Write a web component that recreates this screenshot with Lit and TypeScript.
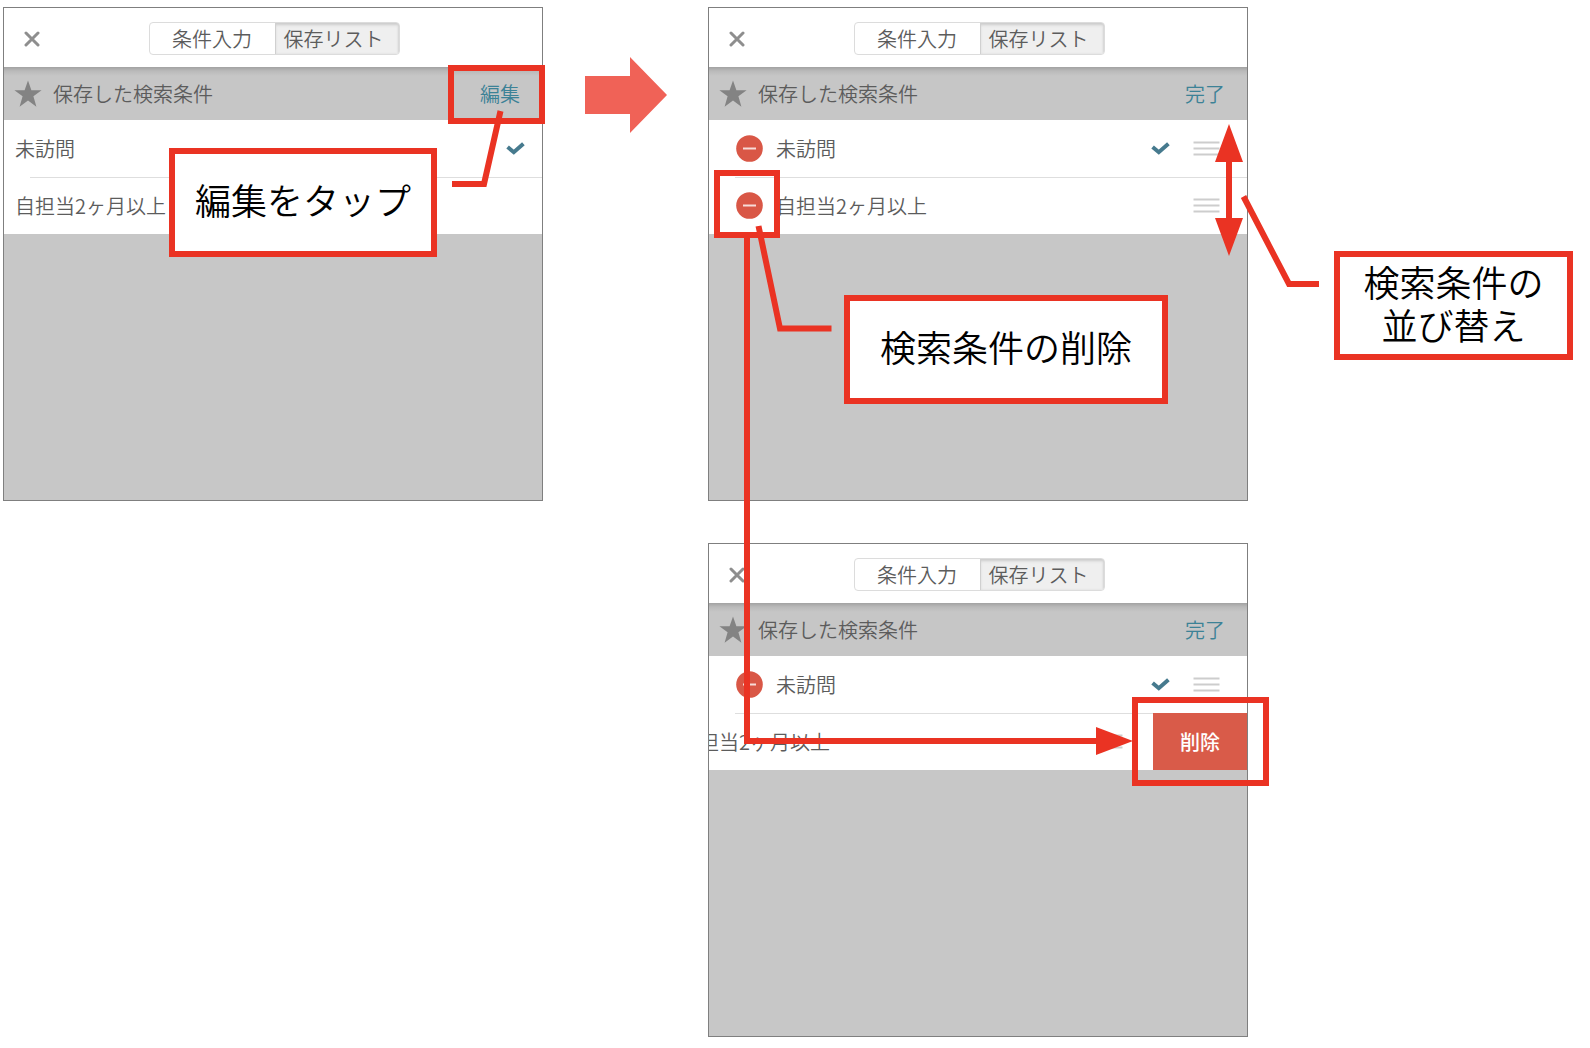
import { LitElement, html, css, svg, nothing } from "lit";
import { customElement, property } from "lit/decorators.js";
import { classMap } from "lit/directives/class-map.js";

interface SavedCondition {
  name: string;
  checked?: boolean;
  swiped?: boolean;
}

const closeIcon = html`<svg width="16" height="16" viewBox="0 0 16 16" aria-hidden="true">
  <path d="M2 2L14 14M14 2L2 14" fill="none" stroke="#8e8e8e" stroke-width="3" stroke-linecap="round" />
</svg>`;

const starIcon = html`<svg width="28" height="28" viewBox="0 0 28 28" aria-hidden="true">
  <path d="M14 0.5L17.4 10.2H27.6L19.4 16.2L22.4 26.8L14 20.4L5.6 26.8L8.6 16.2L0.4 10.2H10.6Z" fill="#838383" />
</svg>`;

const checkIcon = html`<svg width="19" height="13" viewBox="0 0 19 13" role="img" aria-label="選択中">
  <path d="M1.6 5L7.8 10.2L17.4 1.8" fill="none" stroke="#467a8e" stroke-width="4" />
</svg>`;

const minusIcon = html`<svg width="27" height="27" viewBox="0 0 27 27" aria-hidden="true">
  <circle cx="13.5" cy="13.5" r="13.3" fill="#d95746" />
  <path d="M7 13.5H20" stroke="#f7dcd8" stroke-width="2" />
</svg>`;

const handleIcon = html`<svg width="27" height="15" viewBox="0 0 27 15" aria-hidden="true">
  <path d="M0.5 1.5H26.5M0.5 7.5H26.5M0.5 13.5H26.5" stroke="#cdcdcd" stroke-width="1.8" />
</svg>`;

@customElement("condition-panel")
export class ConditionPanel extends LitElement {
  @property({ attribute: false }) items: SavedCondition[] = [];
  @property({ type: Boolean }) editing = false;

  static styles = css`
    :host {
      display: block;
      box-sizing: border-box;
      min-height: 494px;
      overflow: hidden;
      border: 1px solid #7f7f7f;
      background: #c7c7c7;
      color: #5c5c5c;
      font-family: "Noto Sans CJK JP", "Liberation Sans", sans-serif;
      font-size: 20px;
      font-weight: 350;
      line-height: 28px;
    }
    button {
      margin: 0;
      padding: 0;
      border: 0;
      background: none;
      color: inherit;
      font: inherit;
      cursor: pointer;
    }
    svg {
      display: block;
    }
    .head {
      display: grid;
      grid-template-columns: 1fr auto 1fr;
      align-items: center;
      height: 59px;
      padding: 2px 18px 0 20px;
      box-sizing: border-box;
      background: #fff;
    }
    .close {
      justify-self: start;
    }
    .tabs {
      display: grid;
      grid-template-columns: 125px 124px;
      height: 33px;
      box-sizing: border-box;
      border: 1px solid #dcdcdc;
      border-radius: 4px;
      overflow: hidden;
    }
    .tab.active {
      padding-left: 8px;
      text-align: left;
      background: #efefef;
      border-left: 1px solid #d0d0d0;
      box-shadow: inset 0 3px 3px -1px #cbcbcb, inset -1px 0 2px #d6d6d6;
    }
    .bar {
      display: flex;
      align-items: center;
      gap: 11px;
      height: 53px;
      padding: 0 22px 0 10px;
      box-sizing: border-box;
      background: linear-gradient(#a2a2a2, #bababa 4px, #c6c6c6 9px);
    }
    .title {
      flex: 1;
      margin: 0;
      font: inherit;
    }
    .toggle {
      color: #3c8296;
    }
    .list {
      margin: 0;
      padding: 0;
      list-style: none;
      background: #fff;
    }
    .row {
      display: flex;
      gap: 3px;
      height: 57px;
      overflow: hidden;
    }
    .row + .row {
      background: linear-gradient(#dedede, #dedede) 26px 0 / 100% 1px no-repeat;
    }
    .content {
      display: flex;
      flex: 0 0 100%;
      align-items: center;
      gap: 24px;
      box-sizing: border-box;
      padding: 0 17px 0 11px;
    }
    .editing .content {
      gap: 13px;
      padding: 0 27px;
    }
    .name {
      flex: 1;
    }
    .order {
      margin-left: 10px;
    }
    .swiped .content {
      margin-left: -97px;
    }
    .remove {
      flex: 1;
      background: #d95b49;
      color: #fff;
      font-weight: 500;
    }
  `;

  private row(item: SavedCondition) {
    return html`<li class=${classMap({ row: true, swiped: !!item.swiped })}>
      <div class="content">
        ${this.editing ? html`<button aria-label="${item.name}を削除">${minusIcon}</button>` : nothing}
        <span class="name">${item.name}</span>
        ${item.checked ? checkIcon : nothing}
        ${this.editing ? html`<button class="order" aria-label="並び替え">${handleIcon}</button>` : nothing}
      </div>
      ${item.swiped ? html`<button class="remove">削除</button>` : nothing}
    </li>`;
  }

  render() {
    return html`
      <header class="head">
        <button class="close" aria-label="閉じる">${closeIcon}</button>
        <div class="tabs">
          <button class="tab">条件入力</button>
          <button class="tab active">保存リスト</button>
        </div>
      </header>
      <div class="bar">
        ${starIcon}
        <h2 class="title">保存した検索条件</h2>
        <button class="toggle">${this.editing ? "完了" : "編集"}</button>
      </div>
      <ul class=${classMap({ list: true, editing: this.editing })}>
        ${this.items.map((item) => this.row(item))}
      </ul>
    `;
  }
}

const leader = (points: string) =>
  svg`<polyline points=${points} fill="none" stroke="#ea3323" stroke-width="6" />`;

@customElement("app-root")
export class AppRoot extends LitElement {
  static styles = css`
    :host {
      display: block;
      min-height: 100vh;
      box-sizing: border-box;
      padding: 7px 0 11px 3px;
      background: #fff;
      color: #000;
      font-family: "Liberation Sans", "Noto Sans CJK JP", sans-serif;
    }
    svg {
      display: block;
    }
    .guide {
      display: grid;
      grid-template-columns: 540fr 165fr 540fr 342fr;
      align-items: start;
    }
    .step {
      position: relative;
      display: grid;
      gap: 42px;
    }
    .next {
      display: flex;
      justify-content: center;
      padding-top: 50px;
    }
    .aside {
      padding: 244px 17px 0 86px;
    }
    .callout {
      display: flex;
      align-items: center;
      justify-content: center;
      box-sizing: border-box;
      height: 109px;
      margin: 0;
      border: 6px solid #ea3323;
      background: #fff;
      font-size: 36px;
      font-weight: 350;
      line-height: 43px;
      text-align: center;
      white-space: nowrap;
    }
    .mark,
    .note,
    .line,
    .path {
      position: absolute;
    }
    .mark {
      box-sizing: border-box;
      border: 6px solid #ea3323;
    }
    .mark-edit {
      top: 58px;
      right: -2px;
      width: 97px;
      height: 59px;
    }
    .note-edit {
      top: 141px;
      right: 106px;
      width: 268px;
    }
    .line-edit {
      top: 100px;
      right: 36px;
    }
    .mark-minus {
      top: 163px;
      left: 6px;
      width: 66px;
      height: 68px;
    }
    .line-minus {
      top: 215px;
      left: 44px;
    }
    .note-minus {
      top: 288px;
      left: 136px;
      width: 324px;
    }
    .line-order {
      top: 117px;
      right: 5px;
    }
    .line-aside {
      top: 187px;
      right: -72px;
    }
    .mark-remove {
      top: 690px;
      right: -21px;
      width: 137px;
      height: 89px;
    }
    .path {
      top: 231px;
      left: 36px;
      right: 150px;
      height: 506px;
      box-sizing: border-box;
      border: solid #ea3323;
      border-width: 0 0 6px 6px;
    }
    .line-head {
      top: 720px;
      right: 115px;
    }
  `;

  private first: SavedCondition[] = [{ name: "未訪問", checked: true }, { name: "自担当2ヶ月以上" }];
  private swiped: SavedCondition[] = [
    { name: "未訪問", checked: true },
    { name: "自担当2ヶ月以上", swiped: true },
  ];

  render() {
    return html`
      <main class="guide">
        <section class="step">
          <condition-panel .items=${this.first}></condition-panel>
          <div class="mark mark-edit"></div>
          <p class="callout note note-edit">編集をタップ</p>
          <svg class="line line-edit" width="58" height="84" viewBox="0 0 58 84">
            ${leader("3,77 35,77 51.5,4")}
          </svg>
        </section>

        <div class="next">
          <svg width="82" height="76" viewBox="0 0 82 76" role="img" aria-label="次へ">
            <path d="M0 19H45V0L82 38L45 76V57H0Z" fill="#f06257" />
          </svg>
        </div>

        <section class="step">
          <condition-panel editing .items=${this.first}></condition-panel>
          <condition-panel editing .items=${this.swiped}></condition-panel>
          <div class="path"></div>
          <svg class="line line-head" width="37" height="28" viewBox="0 0 37 28">
            <path d="M0 0L37 14L0 28Z" fill="#ea3323" />
          </svg>
          <div class="mark mark-minus"></div>
          <svg class="line line-minus" width="80" height="112" viewBox="0 0 80 112">
            ${leader("6.5,4 28,106.5 79.5,106.5")}
          </svg>
          <p class="callout note note-minus">検索条件の削除</p>
          <svg class="line line-order" width="28" height="132" viewBox="0 0 28 132">
            <path d="M14 0L28 38H17V94H28L14 132L0 94H11V38H0Z" fill="#ea3323" />
          </svg>
          <svg class="line line-aside" width="80" height="96" viewBox="0 0 80 96">
            ${leader("3.5,2.5 49,90 79,90")}
          </svg>
          <div class="mark mark-remove"></div>
        </section>

        <aside class="aside">
          <p class="callout">検索条件の<br />並び替え</p>
        </aside>
      </main>
    `;
  }
}
